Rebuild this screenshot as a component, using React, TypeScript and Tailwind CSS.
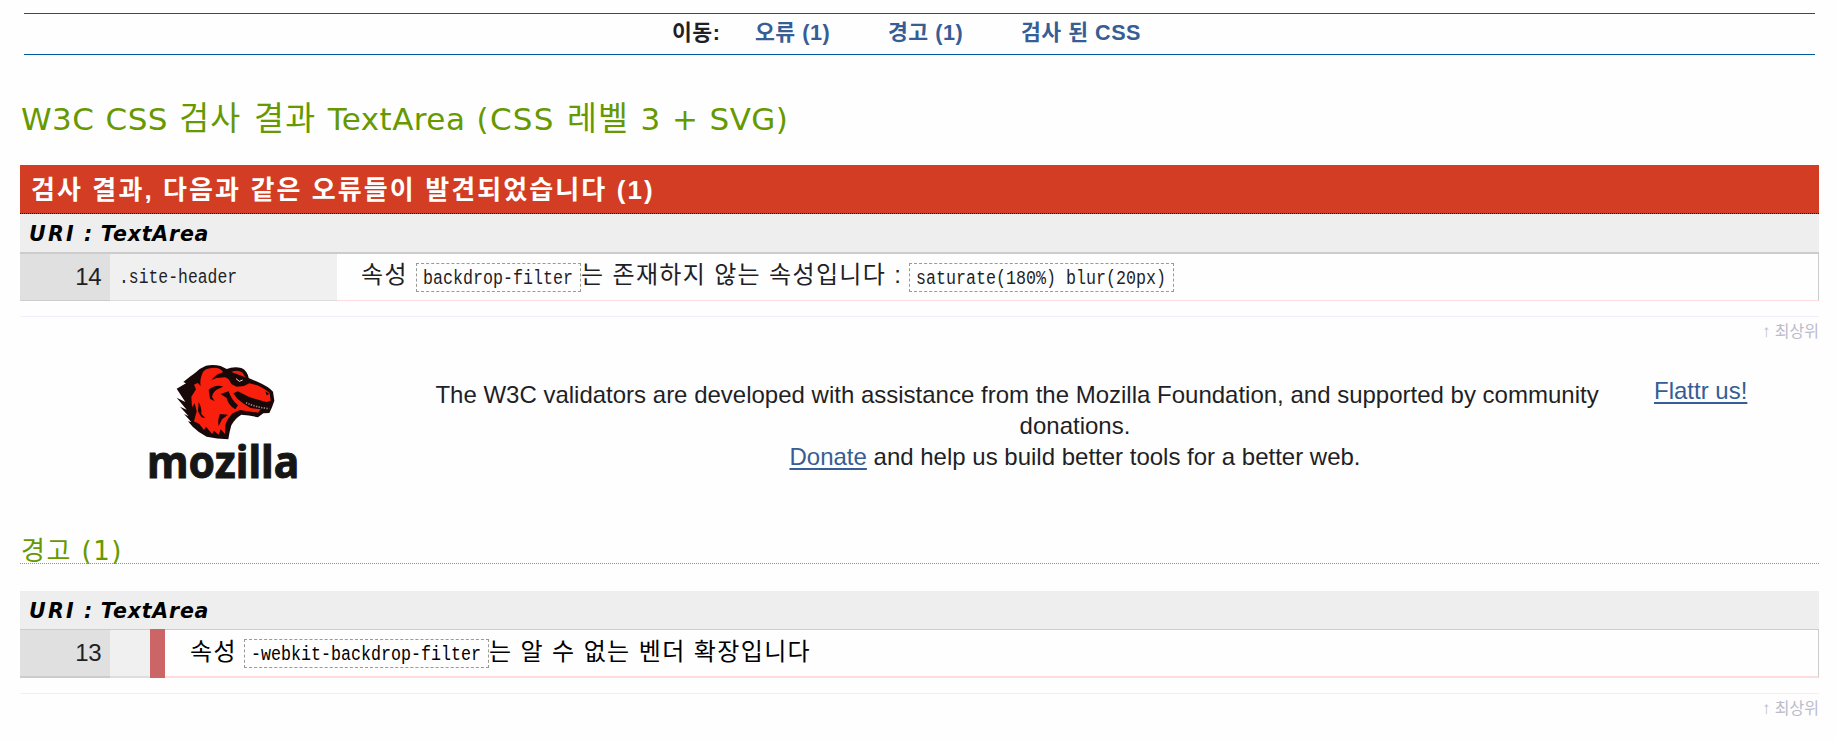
import React from "react";

const sans = "font-['Liberation_Sans','Noto_Sans_CJK_KR',sans-serif]";
const verdana = "font-['DejaVu_Sans','Noto_Sans_CJK_KR',sans-serif]";

function Code({ children, className }: { children: string; className: string }) {
  return (
    <code
      className={`flex h-[29px] shrink-0 justify-center border border-dashed border-[#999] font-['Liberation_Mono',monospace] text-[20px] leading-[29px] tracking-normal whitespace-pre ${className}`}
    >
      <span className="block scale-x-[0.833]">{children}</span>
    </code>
  );
}

function Uri() {
  return (
    <h4
      className={`h-[38px] bg-[#eee] pl-[9px] text-[20.5px] leading-[41px] font-bold tracking-[0.8px] text-black italic ${verdana}`}
    >
      <span className="tracking-[2.3px]">URI</span> : TextArea
    </h4>
  );
}

function Top() {
  return (
    <p className="h-[40px] border-t border-[#eef] text-right text-[16px] leading-[29px] text-[#bbc]">
      <a href="#top">
        <span className="text-[17px]">↑</span> 최상위
      </a>
    </p>
  );
}

function Hangul({ children }: { children: string }) {
  return <span className="text-[32.5px] leading-none tracking-[1.3px]">{children}</span>;
}

function MozillaLogo() {
  return (
    <svg viewBox="0 0 570 420" className="block h-[140px] w-[190px]">
      <g transform="translate(120 24)">
        <path
          d="M108 23 Q130 18 152 24 L170 33 Q190 25 214 30 Q232 38 236 60 L264 72 Q296 86 309 101 L313 128 L306 148 L298 165 L280 166 L264 178 Q240 172 214 170 Q194 182 184 202 Q178 222 175 244 Q140 242 110 236 Q86 224 68 206 L54 190 L64 192 L42 168 L56 175 L30 146 L50 155 L20 119 L46 132 L20 92 L48 76 L40 72 Q56 58 76 44 Q90 30 108 23Z"
          fill="#180808"
        />
        <path
          d="M108 34 Q132 25 150 33 L160 42 L140 50 L124 66 L140 60 L166 58 L176 64 L184 78 L200 86 L222 84 L238 76 L262 82 Q288 94 299 106 L302 128 L290 132 Q258 124 236 116 L204 100 L190 106 L202 122 L222 138 L242 150 L272 154 L264 164 Q236 160 210 156 L188 166 Q170 184 166 202 L165 228 L152 214 L146 230 L132 218 L126 228 L108 206 L102 216 L88 198 L72 190 L80 160 L74 136 L66 148 L64 116 L78 94 L72 80 L84 74 L94 46Z"
          fill="#f8200d"
        />
        <path d="M116 96 Q136 78 160 86 L146 92 Q130 98 126 116 L134 130 L120 122Z" fill="#180808" />
        <path d="M100 40 Q88 64 92 84 L84 76 L82 56Z" fill="#180808" />
        <path d="M86 132 Q96 150 94 168 L106 180 L94 178 L84 160Z" fill="#180808" />
        <path d="M176 100 Q184 126 204 142 L196 154 Q174 142 170 120 L152 108Z" fill="#180808" />
        <path d="M150 168 Q142 186 146 204 L156 184 L174 170Z" fill="#180808" />
        <path d="M184 42 Q202 34 218 44 L226 58 L206 50Z" fill="#e9200f" />
        <path d="M198 62 L208 70 L218 66" stroke="#f5d8d0" strokeWidth="3" fill="none" />
        <path d="M228 134 Q258 148 298 152" stroke="#9a8480" strokeWidth="5" strokeDasharray="4 4" fill="none" />
        <path d="M286 100 L298 108 L290 112Z" fill="#180808" />
      </g>
      <text
        x="51"
        y="385"
        textLength="457"
        lengthAdjust="spacingAndGlyphs"
        className="font-['Noto_Sans',sans-serif] text-[134px] font-bold"
        fill="#161616"
        stroke="#161616"
        strokeWidth="3"
      >
        mozilla
      </text>
    </svg>
  );
}

export default function App() {
  return (
    <div className={`h-[742px] w-[1836px] overflow-hidden bg-[#fefefe] pt-[13px] pr-[17px] pl-5 text-[#1f1f26] ${sans}`}>
      <nav className="mr-1 ml-1 flex h-[42px] border-y border-[#005a9c] pl-[648px] text-[21.6px] leading-[38px] font-bold tracking-[0.5px] whitespace-nowrap">
        <span className="w-[83px]">이동:</span>
        <a href="#errors" className="w-[133px] text-[#365d95]">오류 (1)</a>
        <a href="#warnings" className="w-[133px] text-[#365d95]">경고 (1)</a>
        <a href="#css" className="text-[#365d95]">검사 된 CSS</a>
      </nav>

      <h2 className={`mt-[44px] h-[66px] pl-px text-[31px] leading-[40px] tracking-[0.45px] whitespace-nowrap text-[#690] [word-spacing:0.9px] ${verdana}`}>
        W3C CSS <Hangul>검사 결과</Hangul> TextArea <span className="tracking-[1.3px]">(CSS </span>
        <Hangul>레벨</Hangul> 3 + SVG)
      </h2>

      <section id="errors">
        <h3 className={`h-[49px] border-b border-dotted border-black bg-[#d23d24] pl-[11px] text-[26px] leading-[50px] font-bold tracking-[2.1px] whitespace-nowrap text-white ${sans}`}>
          검사 결과, 다음과 같은 오류들이 발견되었습니다 (1)
        </h3>
        <Uri />
        <div className="flex h-[49px] border-t-2 border-[#ccc] text-[24px] whitespace-nowrap">
          <div className="w-[90px] border-b border-[#ccc] bg-[#e0e0e0] pr-[9px] text-right leading-[46px] tracking-[-0.5px]">14</div>
          <div className="w-[227px] border-b border-[#ddd] bg-[#f0f0f0] pl-[9px] font-['Liberation_Mono',monospace] text-[20px] leading-[48px]">
            <span className="block origin-left scale-x-[0.82]">.site-header</span>
          </div>
          <div className="flex flex-1 border-r border-b border-r-[#ccc] border-b-[#fdd] pl-[24px] leading-[42px] tracking-[1.35px]">
            <span className="w-[55px]">속성</span>
            <Code className="mt-[9px] w-[165px]">backdrop-filter</Code>
            <span className="w-[328px]">는 존재하지 않는 속성입니다 :</span>
            <Code className="mt-[9px] w-[265px]">saturate(180%) blur(20px)</Code>
          </div>
        </div>
        <div className="h-[15px]" />
        <Top />
      </section>

      <div className="flex h-[155px]">
        <div className="-mt-[6px] w-[383px] pl-[110px]">
          <MozillaLogo />
        </div>
        <div className="mt-[23px] w-[1344px] text-center text-[24px] leading-[31px]">
          <a
            href="#flattr"
            className="float-right -mt-[4px] w-[116px] pl-[23px] text-left whitespace-nowrap text-[#365d95] underline decoration-2 underline-offset-[3px]"
          >
            Flattr us!
          </a>
          <p>
            The W3C validators are developed with assistance from the Mozilla Foundation, and supported by community
            donations.
            <br />
            <a href="#donate" className="text-[#365d95] underline decoration-2 underline-offset-[3px]">Donate</a> and help us
            build better tools for a better web.
          </p>
        </div>
      </div>

      <section id="warnings" className="mt-[19px]">
        <h3 className={`h-[34px] border-b border-dotted border-[#996] pl-px text-[26px] leading-[42px] tracking-[1.5px] text-[#690] ${verdana}`}>
          경고 (1)
        </h3>
        <div className="h-[27px]" />
        <Uri />
        <div className="flex h-[49px] text-[24px] whitespace-nowrap">
          <div className="w-[90px] border-t border-b-2 border-[#ccc] bg-[#e0e0e0] pr-[9px] text-right leading-[46px] tracking-[-0.5px]">13</div>
          <div className="w-[40px] border-t border-b-2 border-t-[#ccc] border-b-[#ddd] bg-[#f0f0f0]" />
          <div className="w-[15px] bg-[#c66]" />
          <div className="flex flex-1 border-t border-r border-b-2 border-t-[#ccc] border-r-[#ccc] border-b-[#fdd] pl-[25px] leading-[43px] tracking-[1.4px] text-black">
            <span className="w-[54px]">속성</span>
            <Code className="mt-[9px] w-[245px]">-webkit-backdrop-filter</Code>
            <span>는 알 수 없는 벤더 확장입니다</span>
          </div>
        </div>
        <div className="h-[15px]" />
        <Top />
      </section>
    </div>
  );
}
